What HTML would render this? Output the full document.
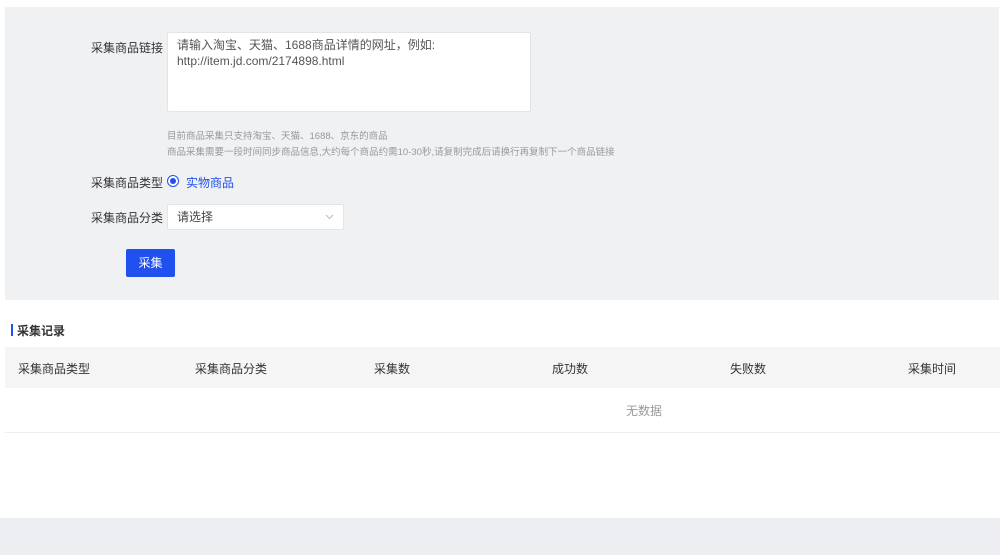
<!DOCTYPE html>
<html><head><meta charset="utf-8"><style>
*{margin:0;padding:0;box-sizing:border-box}
body{width:1000px;height:555px;background:#fff;font-family:"Liberation Sans","Noto Sans CJK SC",sans-serif;font-size:12px;color:#333;position:relative;overflow:hidden}
.panel{position:absolute;left:5px;top:7px;width:994px;height:293px;background:#f0f1f3}
.a{position:absolute}
.lbl{position:absolute;left:91px;font-size:12px;color:#333}
.ta{position:absolute;left:167px;top:32px;width:364px;height:80px;background:#fff;border:1px solid #e3e4e6;border-radius:2px;padding:4px 9px;line-height:16px;color:#555;font-size:12px}
.tip{position:absolute;left:167px;color:#999;font-size:9.5px}
.sel{position:absolute;left:167px;top:204px;width:177px;height:26px;background:#fff;border:1px solid #e3e4e6;border-radius:2px;padding-left:9px;line-height:25px;font-size:12px;color:#444}
.btn{position:absolute;left:126px;top:249px;width:49px;height:28px;background:#2050f0;color:#fff;border-radius:2px;text-align:center;line-height:28px;font-size:12px}
.th{position:absolute;top:347px;left:5px;width:995px;height:41px;background:#f5f5f5}
.th span{position:absolute;top:13px;font-size:12px;color:#333}
</style></head><body>
<div class="panel"></div>
<div class="lbl" style="top:39px">采集商品链接</div>
<div class="ta">请输入淘宝、天猫、1688商品详情的网址，例如:<br>http://item.jd.com/2174898.html</div>
<div class="tip" style="top:128px">目前商品采集只支持淘宝、天猫、1688、京东的商品</div>
<div class="tip" style="top:144px">商品采集需要一段时间同步商品信息,大约每个商品约需10-30秒,请复制完成后请换行再复制下一个商品链接</div>
<div class="lbl" style="top:174px">采集商品类型</div>
<div class="a" style="left:167px;top:175px;width:12px;height:12px;border:1px solid #2050f0;border-radius:50%;background:#fff"><div style="position:absolute;left:2px;top:2px;width:6px;height:6px;border-radius:50%;background:#2050f0"></div></div>
<div class="a" style="left:186px;top:174px;color:#2050f0">实物商品</div>
<div class="lbl" style="top:209px">采集商品分类</div>
<div class="sel">请选择<svg style="position:absolute;right:9px;top:9px" width="9" height="6" viewBox="0 0 9 6"><path d="M1 1l3.5 3.5L8 1" fill="none" stroke="#bbb" stroke-width="1"/></svg></div>
<div class="btn">采集</div>
<div class="a" style="left:11px;top:324px;width:2px;height:12px;background:#2050f0"></div>
<div class="a" style="left:17px;top:322px;font-weight:bold;font-size:12px">采集记录</div>
<div class="th"><span style="left:13px">采集商品类型</span><span style="left:190px">采集商品分类</span><span style="left:369px">采集数</span><span style="left:547px">成功数</span><span style="left:725px">失败数</span><span style="left:903px">采集时间</span></div>
<div class="a" style="left:626px;top:402px;color:#999">无数据</div>
<div class="a" style="left:5px;top:432px;width:995px;height:1px;background:#eee"></div>
<div class="a" style="left:0;top:518px;width:1000px;height:37px;background:#eceef1"></div>
</body></html>
